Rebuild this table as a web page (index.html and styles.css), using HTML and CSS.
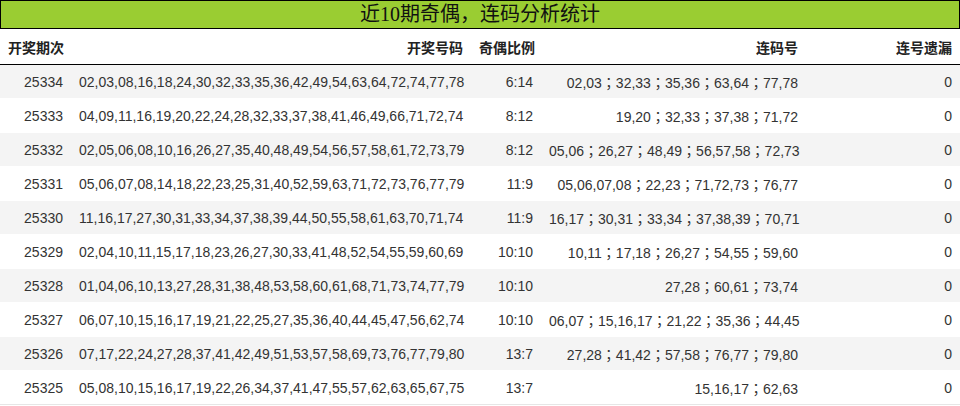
FILE: index.html
```html
<!DOCTYPE html>
<html lang="zh-CN">
<head>
<meta charset="utf-8">
<title>近10期奇偶，连码分析统计</title>
<link rel="stylesheet" href="styles.css">
</head>
<body>
<div class="panel">
  <div class="title">近<span class="num">10</span>期奇偶，连码分析统计</div>
  <table class="stats">
    <colgroup>
      <col class="c-issue">
      <col class="c-nums">
      <col class="c-ratio">
      <col class="c-seq">
      <col class="c-miss">
    </colgroup>
    <thead>
      <tr><th>开奖期次</th><th>开奖号码</th><th>奇偶比例</th><th>连码号</th><th>连号遗漏</th></tr>
    </thead>
    <tbody>
      <tr><td>25334</td><td>02,03,08,16,18,24,30,32,33,35,36,42,49,54,63,64,72,74,77,78</td><td>6:14</td><td class="seq">02,03；32,33；35,36；63,64；77,78</td><td>0</td></tr>
      <tr><td>25333</td><td>04,09,11,16,19,20,22,24,28,32,33,37,38,41,46,49,66,71,72,74</td><td>8:12</td><td class="seq">19,20；32,33；37,38；71,72</td><td>0</td></tr>
      <tr><td>25332</td><td>02,05,06,08,10,16,26,27,35,40,48,49,54,56,57,58,61,72,73,79</td><td>8:12</td><td class="seq">05,06；26,27；48,49；56,57,58；72,73</td><td>0</td></tr>
      <tr><td>25331</td><td>05,06,07,08,14,18,22,23,25,31,40,52,59,63,71,72,73,76,77,79</td><td>11:9</td><td class="seq">05,06,07,08；22,23；71,72,73；76,77</td><td>0</td></tr>
      <tr><td>25330</td><td>11,16,17,27,30,31,33,34,37,38,39,44,50,55,58,61,63,70,71,74</td><td>11:9</td><td class="seq">16,17；30,31；33,34；37,38,39；70,71</td><td>0</td></tr>
      <tr><td>25329</td><td>02,04,10,11,15,17,18,23,26,27,30,33,41,48,52,54,55,59,60,69</td><td>10:10</td><td class="seq">10,11；17,18；26,27；54,55；59,60</td><td>0</td></tr>
      <tr><td>25328</td><td>01,04,06,10,13,27,28,31,38,48,53,58,60,61,68,71,73,74,77,79</td><td>10:10</td><td class="seq">27,28；60,61；73,74</td><td>0</td></tr>
      <tr><td>25327</td><td>06,07,10,15,16,17,19,21,22,25,27,35,36,40,44,45,47,56,62,74</td><td>10:10</td><td class="seq">06,07；15,16,17；21,22；35,36；44,45</td><td>0</td></tr>
      <tr><td>25326</td><td>07,17,22,24,27,28,37,41,42,49,51,53,57,58,69,73,76,77,79,80</td><td>13:7</td><td class="seq">27,28；41,42；57,58；76,77；79,80</td><td>0</td></tr>
      <tr><td>25325</td><td>05,08,10,15,16,17,19,22,26,34,37,41,47,55,57,62,63,65,67,75</td><td>13:7</td><td class="seq">15,16,17；62,63</td><td>0</td></tr>
    </tbody>
  </table>
</div>
</body>
</html>
```

FILE: styles.css
```css
html, body {
  margin: 0;
  padding: 0;
  background: #fff;
}

body {
  font-family: "Liberation Sans", "Noto Sans CJK SC", sans-serif;
  font-size: 14px;
  color: #333;
}

.panel {
  width: 960px;
}

.title {
  box-sizing: border-box;
  height: 29px;
  line-height: 27px;
  border: 1px solid #000;
  background: #9acd32;
  color: #111;
  text-align: center;
  font-family: "Liberation Serif", "Noto Sans CJK SC", serif;
  font-size: 20px;
}

.title .num {
  font-family: "Liberation Serif", serif;
}

.stats {
  width: 960px;
  table-layout: fixed;
  border-collapse: collapse;
  border-spacing: 0;
}

.c-issue { width: 71px; }
.c-nums { width: 400px; }
.c-ratio { width: 70px; }
.c-seq { width: 265px; }
.c-miss { width: 154px; }

.stats th,
.stats td {
  padding: 0 8px;
  text-align: right;
  white-space: nowrap;
  overflow: hidden;
}

.stats th {
  height: 35px;
  font-weight: bold;
  color: #222;
  border-bottom: 1px solid #000;
  text-align: right;
}

.stats thead th:first-child {
  text-align: left;
}

.stats td {
  height: 33px;
  border-top: 1px solid #fff;
}

.stats td.seq {
  font-family: "Liberation Sans", "Noto Sans CJK TC", sans-serif;
}

.stats tbody tr:nth-child(odd) td {
  background: #f4f4f4;
}

.stats tbody tr:last-child td {
  border-bottom: 1px solid #e6e6e6;
}
```
